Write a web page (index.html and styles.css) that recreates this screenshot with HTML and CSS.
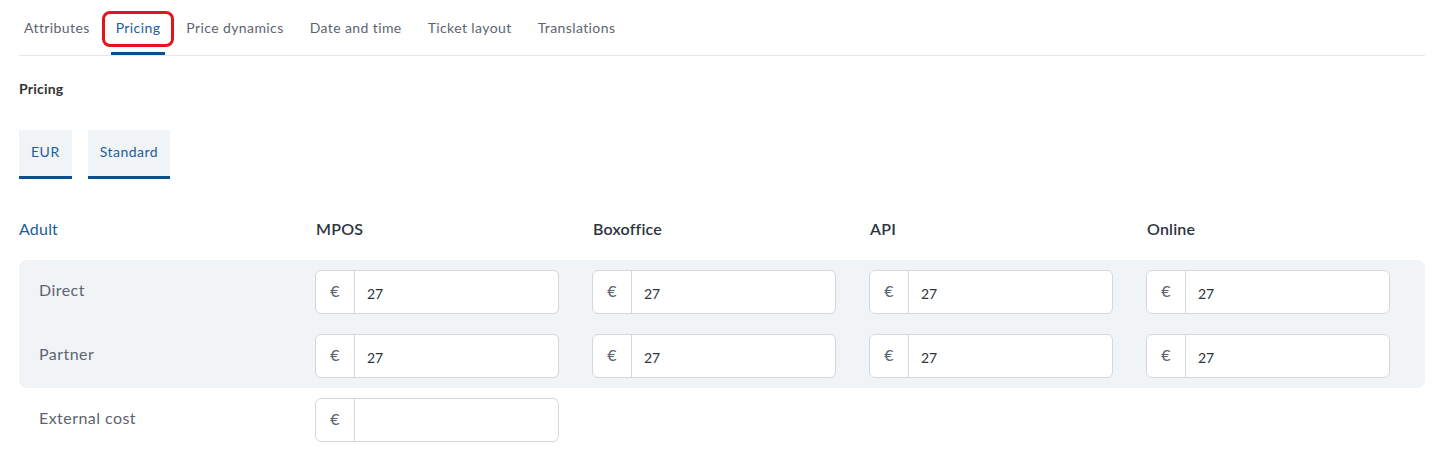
FILE: index.html
```html
<!DOCTYPE html>
<html lang="en">

<head>
    <meta charset="UTF-8">
    <meta name="viewport" content="width=device-width, initial-scale=1.0">
    <title>Pricing</title>
    <link rel="stylesheet" href="styles.css">
</head>

<body>
    <div class="page">
        <nav class="tabs">
            <a class="tab">Attributes</a>
            <a class="tab active">Pricing<span class="highlight"></span></a>
            <a class="tab">Price dynamics</a>
            <a class="tab">Date and time</a>
            <a class="tab">Ticket layout</a>
            <a class="tab">Translations</a>
        </nav>

        <h4 class="section-title">Pricing</h4>

        <div class="chips">
            <div class="chip">EUR</div>
            <div class="chip">Standard</div>
        </div>

        <div class="row header-row">
            <div class="group-name">Adult</div>
            <div class="channel">MPOS</div>
            <div class="channel">Boxoffice</div>
            <div class="channel">API</div>
            <div class="channel">Online</div>
        </div>

        <div class="band">
            <div class="row price-row">
                <div class="label">Direct</div>
                <div class="input-group"><span class="addon">€</span><input type="text" value="27"></div>
                <div class="input-group"><span class="addon">€</span><input type="text" value="27"></div>
                <div class="input-group"><span class="addon">€</span><input type="text" value="27"></div>
                <div class="input-group"><span class="addon">€</span><input type="text" value="27"></div>
            </div>
            <div class="row price-row">
                <div class="label">Partner</div>
                <div class="input-group"><span class="addon">€</span><input type="text" value="27"></div>
                <div class="input-group"><span class="addon">€</span><input type="text" value="27"></div>
                <div class="input-group"><span class="addon">€</span><input type="text" value="27"></div>
                <div class="input-group"><span class="addon">€</span><input type="text" value="27"></div>
            </div>
        </div>

        <div class="row price-row external">
            <div class="label">External cost</div>
            <div class="input-group"><span class="addon">€</span><input type="text" value=""></div>
        </div>
    </div>
</body>

</html>
```

FILE: styles.css
```css
:root {
    --blue: #1c5d9c;
    --blue-dark: #0d4f8c;
    --band: #f1f4f7;
    --border: #d3d8de;
    --text: #2d3440;
    --muted: #5d6470;
}

* {
    box-sizing: border-box;
}

body {
    margin: 0;
    font-family: Lato, "Open Sans", sans-serif;
    color: var(--text);
    background: #ffffff;
}

.page {
    padding: 0 9px 0 19px;
}

.tabs {
    display: flex;
    gap: 16px;
    border-bottom: 1px solid #e6e8eb;
}

.tab {
    position: relative;
    padding: 19px 5px 15px;
    font-size: 14px;
    line-height: 18px;
    letter-spacing: 0.4px;
    color: var(--muted);
    border-bottom: 3px solid transparent;
    cursor: pointer;
}

.tab.active {
    color: var(--blue);
    border-bottom-color: var(--blue-dark);
}

/* red annotation round the active tab */
.highlight {
    position: absolute;
    left: -9px;
    right: -9px;
    top: 11px;
    height: 36px;
    border: 3px solid #e3141c;
    border-radius: 8px;
}

.section-title {
    margin: 24px 0 0;
    font-size: 14px;
    line-height: 18px;
    font-weight: 700;
    letter-spacing: 0.2px;
    color: #333;
}

.chips {
    display: flex;
    gap: 16px;
    margin-top: 32px;
}

.chip {
    padding: 13px 12px 15px;
    font-size: 14px;
    line-height: 18px;
    letter-spacing: 0.5px;
    color: var(--blue);
    background: var(--band);
    border-bottom: 3px solid var(--blue-dark);
}

.row {
    display: grid;
    grid-template-columns: 243px repeat(4, 244px);
    column-gap: 33px;
    align-items: center;
}

.header-row {
    grid-template-columns: 264px repeat(4, 244px);
    margin-top: 40px;
    font-size: 16px;
    line-height: 20px;
}

.group-name {
    color: var(--blue);
    letter-spacing: 0.2px;
}

.channel {
    font-weight: 600;
    color: var(--text);
    letter-spacing: 0.2px;
}

.band {
    margin-top: 21px;
    padding: 10px 0;
    background: var(--band);
    border-radius: 8px;
    display: flex;
    flex-direction: column;
    gap: 20px;
}

.price-row {
    padding: 0 20px;
}

.external {
    margin-top: 10px;
}

.label {
    padding-bottom: 5px;
    font-size: 16px;
    letter-spacing: 0.45px;
    color: var(--muted);
}

.input-group {
    display: flex;
    height: 44px;
    background: #ffffff;
    border: 1px solid var(--border);
    border-radius: 6px;
    overflow: hidden;
}

.addon {
    width: 39px;
    flex: none;
    display: flex;
    align-items: center;
    justify-content: center;
    padding-bottom: 3px;
    font-size: 16px;
    color: var(--muted);
    border-right: 1px solid var(--border);
}

.input-group input {
    flex: 1;
    min-width: 0;
    border: none;
    outline: none;
    padding: 2px 12px 0;
    font-family: inherit;
    font-size: 14px;
    color: var(--text);
    background: transparent;
}
```
